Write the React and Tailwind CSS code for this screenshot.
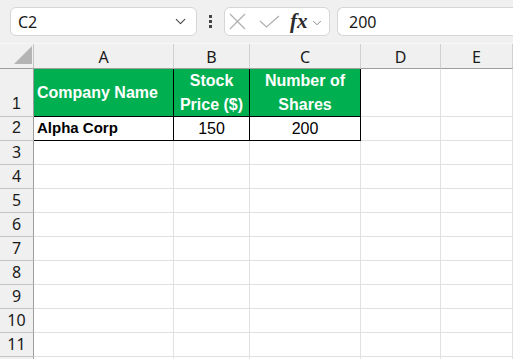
import { ChevronDown } from 'lucide-react'

const cols = [
  { label: 'A', w: 'w-[140px]' },
  { label: 'B', w: 'w-[76px]' },
  { label: 'C', w: 'w-[111px]' },
  { label: 'D', w: 'w-[80px]' },
  { label: 'E', w: 'flex-1' },
]

function Cell({ w, h, className = '', children }) {
  return (
    <div className={`${w} ${h} shrink-0 border-r border-b border-[#e1e1e1] ${className}`}>
      {children}
    </div>
  )
}

function RowHead({ n, h }) {
  return (
    <div className={`w-[34px] ${h} shrink-0 bg-[#f0f0f0] border-r border-r-[#9e9e9e] border-b border-b-[#c4c4c4] flex items-end justify-center pb-[1px] text-[16px] leading-[22px] text-[#1a1a1a]`}>
      {n}
    </div>
  )
}

export default function App() {
  const empty = [3, 4, 5, 6, 7, 8, 9, 10, 11]

  return (
    <div className="w-[513px] h-[359px] overflow-hidden bg-white font-['Noto_Sans',sans-serif]">
      {/* formula bar */}
      <div className="h-[44px] bg-[#f0f0f0] flex items-start pt-[7px] pl-[10px] gap-[7px] border-b border-[#f7f7f7]">
        <div className="w-[187px] h-[29px] bg-white border border-[#d6d6d6] rounded-[6px] flex items-center justify-between px-[7px] text-[16px] text-[#1a1a1a]">
          <span>C2</span>
          <ChevronDown size={17} strokeWidth={1.5} className="text-[#444]" />
        </div>
        <div className="h-[29px] w-[13px] flex flex-col items-center justify-center gap-[2px]">
          <span className="w-[3px] h-[3px] bg-[#444]" />
          <span className="w-[3px] h-[3px] bg-[#444]" />
          <span className="w-[3px] h-[3px] bg-[#444]" />
        </div>
        <div className="w-[106px] h-[29px] bg-white border border-[#d6d6d6] rounded-[6px] flex items-center pl-[4px]">
          <svg width="17" height="17" viewBox="0 0 17 17" className="shrink-0">
            <path d="M1 1 L16 16 M16 1 L1 16" stroke="#b0b0b0" strokeWidth="1.3" fill="none" />
          </svg>
          <svg width="21" height="13" viewBox="0 0 21 13" className="shrink-0 ml-[13px]">
            <path d="M1 6 L7.5 12 L20 1" stroke="#b0b0b0" strokeWidth="1.3" fill="none" />
          </svg>
          <span className="ml-[10px] font-['Liberation_Serif',serif] italic font-bold text-[21px] text-[#2b2b2b] leading-none">fx</span>
          <ChevronDown size={14} strokeWidth={1.5} className="text-[#777] ml-[2px] mt-[2px]" />
        </div>
        <div className="flex-1 h-[29px] bg-white border border-[#d6d6d6] border-r-0 rounded-l-[6px] flex items-center pl-[11px] text-[16px] text-[#1a1a1a]">
          200
        </div>
      </div>

      {/* column headers */}
      <div className="flex h-[25px]">
        <div className="w-[34px] shrink-0 bg-[#f0f0f0] border-r border-r-[#c4c4c4] border-b border-b-[#9e9e9e] relative">
          <svg width="18" height="18" className="absolute left-[14px] top-[2px]" viewBox="0 0 18 18">
            <polygon points="18,0 18,18 0,18" fill="#b4b4b4" />
          </svg>
        </div>
        {cols.map((c) => (
          <div
            key={c.label}
            className={`${c.w} shrink-0 bg-[#f0f0f0] border-r border-r-[#d0d0d0] border-b border-b-[#9e9e9e] flex items-end justify-center text-[16px] leading-[22px] text-[#1a1a1a]`}
          >
            {c.label}
          </div>
        ))}
      </div>

      {/* row 1 */}
      <div className="flex font-['Liberation_Sans',sans-serif] text-[16px]">
        <RowHead n={1} h="h-[48px]" />
        <Cell w="w-[140px]" h="h-[48px]" className="bg-[#00b050] !border-black text-white font-bold flex items-center pl-[3px]">
          Company Name
        </Cell>
        <Cell w="w-[76px]" h="h-[48px]" className="bg-[#00b050] !border-black text-white font-bold flex flex-col items-center justify-center leading-[24px]">
          <span>Stock</span>
          <span>Price ($)</span>
        </Cell>
        <Cell w="w-[111px]" h="h-[48px]" className="bg-[#00b050] !border-black text-white font-bold flex flex-col items-center justify-center leading-[24px]">
          <span>Number of</span>
          <span>Shares</span>
        </Cell>
        <Cell w="w-[80px]" h="h-[48px]" />
        <Cell w="flex-1" h="h-[48px]" />
      </div>

      {/* row 2 */}
      <div className="flex font-['Liberation_Sans',sans-serif] text-[15px] text-black">
        <RowHead n={2} h="h-[24px]" />
        <Cell w="w-[140px]" h="h-[24px]" className="!border-black font-bold flex items-center pl-[3px]">
          Alpha Corp
        </Cell>
        <Cell w="w-[76px]" h="h-[24px]" className="!border-black flex items-center justify-center text-[16px]">
          150
        </Cell>
        <Cell w="w-[111px]" h="h-[24px]" className="!border-black flex items-center justify-center text-[16px]">
          200
        </Cell>
        <Cell w="w-[80px]" h="h-[24px]" />
        <Cell w="flex-1" h="h-[24px]" />
      </div>

      {empty.map((n) => (
        <div key={n} className="flex">
          <RowHead n={n} h="h-[24px]" />
          {cols.map((c) => (
            <Cell key={c.label} w={c.w} h="h-[24px]" />
          ))}
        </div>
      ))}
      <div className="flex">
        <RowHead n="" h="h-[24px]" />
        {cols.map((c) => (
          <Cell key={c.label} w={c.w} h="h-[24px]" />
        ))}
      </div>
    </div>
  )
}
